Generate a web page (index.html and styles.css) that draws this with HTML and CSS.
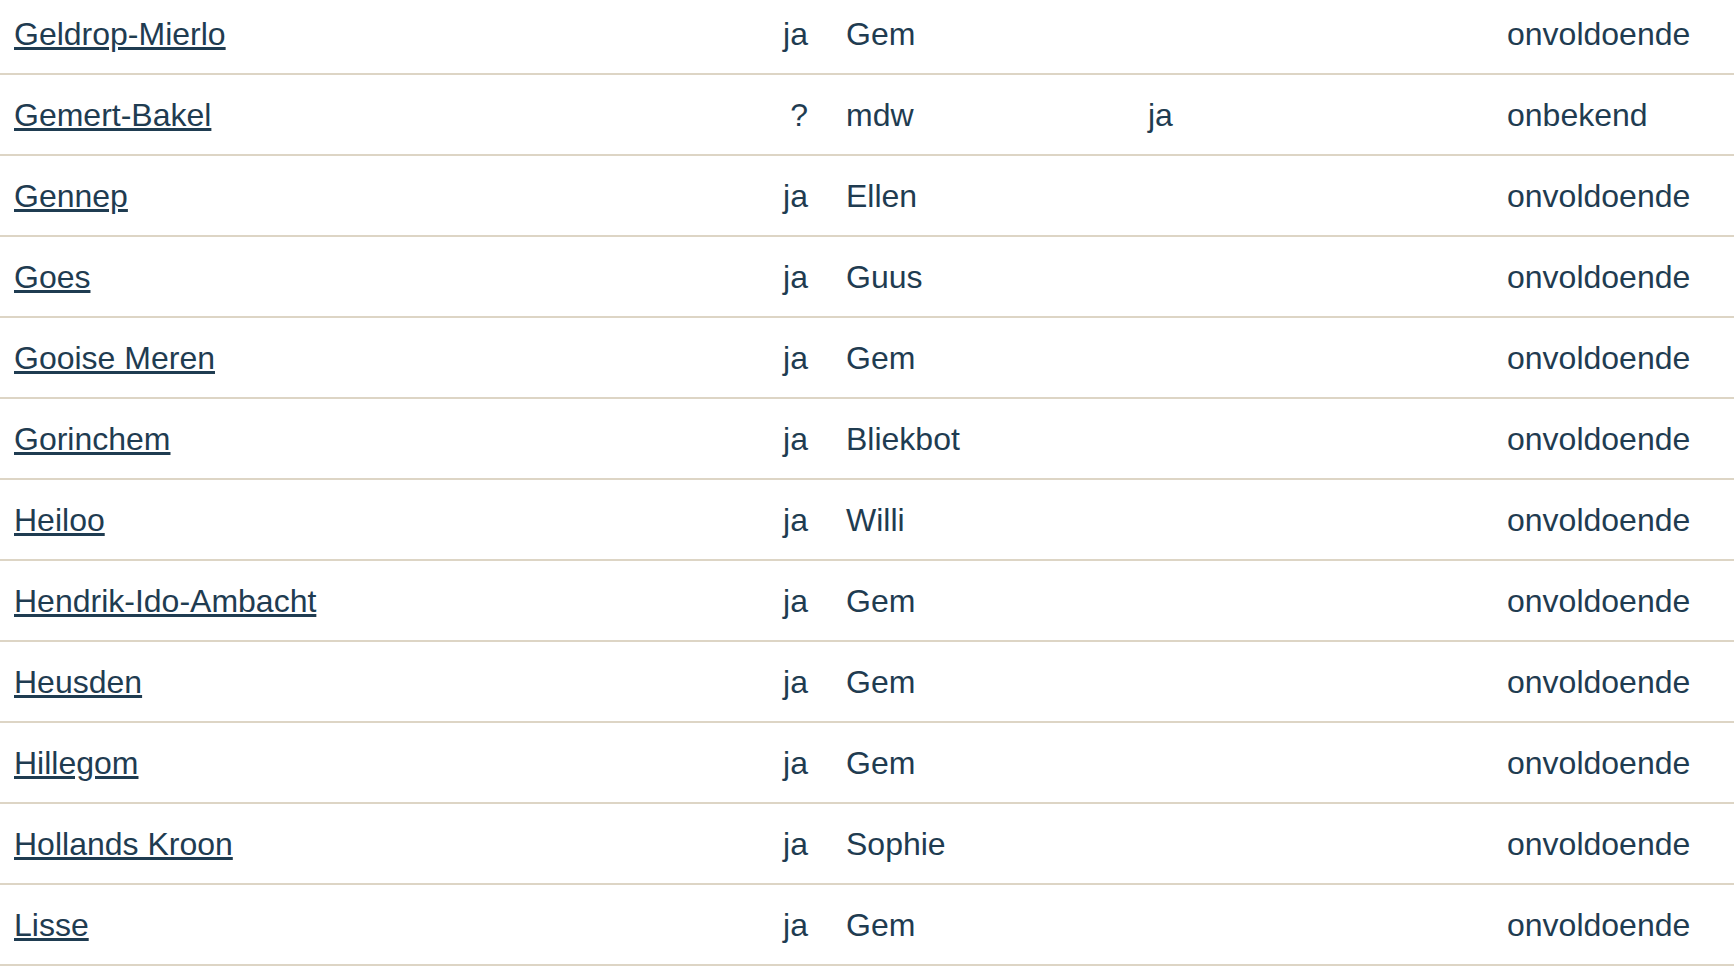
FILE: index.html
```html
<!DOCTYPE html>
<html lang="nl">
<head>
<meta charset="utf-8">
<title>Gemeenten</title>
<link rel="stylesheet" href="styles.css">
</head>
<body>
<div class="table">
  <div class="row"><a class="name" href="#">Geldrop-Mierlo</a><span class="flag">ja</span><span class="who">Gem</span><span class="extra"></span><span class="status">onvoldoende</span></div>
  <div class="row"><a class="name" href="#">Gemert-Bakel</a><span class="flag">?</span><span class="who">mdw</span><span class="extra">ja</span><span class="status">onbekend</span></div>
  <div class="row"><a class="name" href="#">Gennep</a><span class="flag">ja</span><span class="who">Ellen</span><span class="extra"></span><span class="status">onvoldoende</span></div>
  <div class="row"><a class="name" href="#">Goes</a><span class="flag">ja</span><span class="who">Guus</span><span class="extra"></span><span class="status">onvoldoende</span></div>
  <div class="row"><a class="name" href="#">Gooise Meren</a><span class="flag">ja</span><span class="who">Gem</span><span class="extra"></span><span class="status">onvoldoende</span></div>
  <div class="row"><a class="name" href="#">Gorinchem</a><span class="flag">ja</span><span class="who">Bliekbot</span><span class="extra"></span><span class="status">onvoldoende</span></div>
  <div class="row"><a class="name" href="#">Heiloo</a><span class="flag">ja</span><span class="who">Willi</span><span class="extra"></span><span class="status">onvoldoende</span></div>
  <div class="row"><a class="name" href="#">Hendrik-Ido-Ambacht</a><span class="flag">ja</span><span class="who">Gem</span><span class="extra"></span><span class="status">onvoldoende</span></div>
  <div class="row"><a class="name" href="#">Heusden</a><span class="flag">ja</span><span class="who">Gem</span><span class="extra"></span><span class="status">onvoldoende</span></div>
  <div class="row"><a class="name" href="#">Hillegom</a><span class="flag">ja</span><span class="who">Gem</span><span class="extra"></span><span class="status">onvoldoende</span></div>
  <div class="row"><a class="name" href="#">Hollands Kroon</a><span class="flag">ja</span><span class="who">Sophie</span><span class="extra"></span><span class="status">onvoldoende</span></div>
  <div class="row"><a class="name" href="#">Lisse</a><span class="flag">ja</span><span class="who">Gem</span><span class="extra"></span><span class="status">onvoldoende</span></div>
</div>
</body>
</html>
```
FILE: styles.css
```css
html, body {
  margin: 0;
  padding: 0;
  background: #ffffff;
}
body {
  font-family: "Liberation Sans", Arial, sans-serif;
  font-size: 32px;
  color: #1f3c51;
  overflow: hidden;
}
.table {
  margin-top: -6px;
}
.row {
  display: grid;
  grid-template-columns: 746px 48px 340px 359px 1fr;
  align-items: start;
  height: 79px;
  box-sizing: content-box;
  padding-left: 14px;
  border-bottom: 2px solid #ddd5c5;
  line-height: 37px;
}
.row > * {
  padding-top: 22px;
}
.name {
  color: #1f3c51;
  text-decoration: underline;
  justify-self: start;
}
.flag {
  text-align: right;
}
.who {
  padding-left: 38px;
}
```
